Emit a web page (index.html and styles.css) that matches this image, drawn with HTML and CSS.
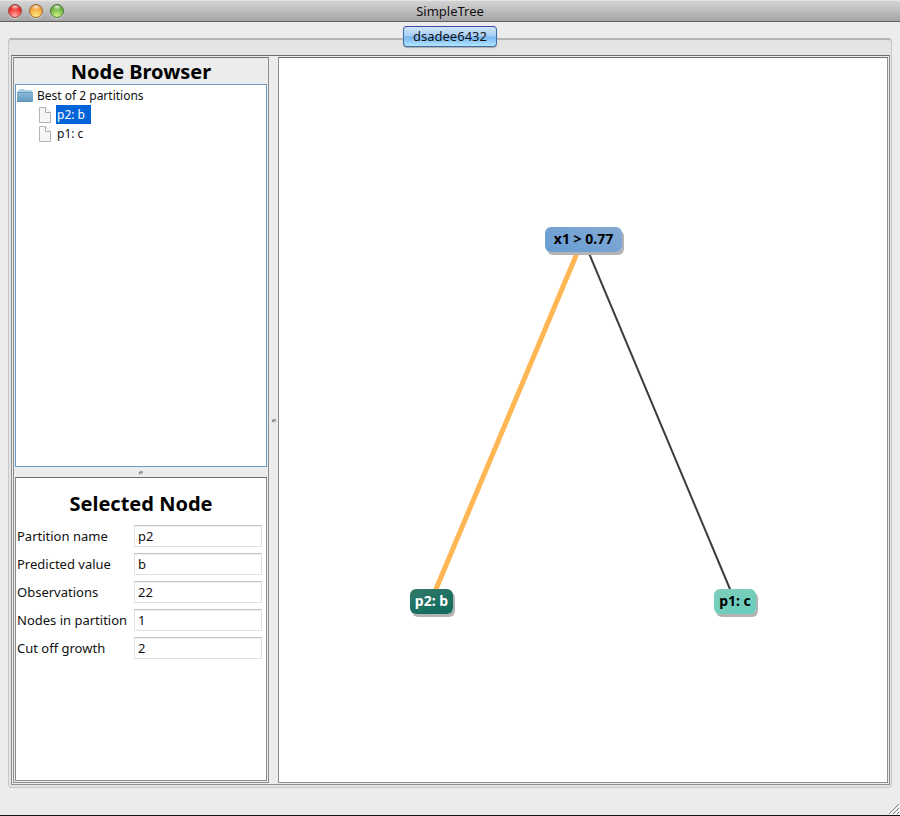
FILE: index.html
```html
<!DOCTYPE html>
<html lang="en">
<head>
<meta charset="utf-8">
<title>SimpleTree</title>
<link rel="stylesheet" href="styles.css">
</head>
<body>
<div class="window">
  <header class="titlebar">
    <div class="lights">
      <button class="light red" aria-label="Close"></button>
      <button class="light amber" aria-label="Minimize"></button>
      <button class="light green" aria-label="Zoom"></button>
    </div>
    <div class="title">SimpleTree</div>
  </header>
  <main class="content">
    <button class="tab">dsadee6432</button>
    <div class="group">
      <div class="split">
        <section class="sidebar">
          <h1 class="heading">Node Browser</h1>
          <ul class="tree">
            <li class="row">
              <svg class="folder" width="16" height="14" viewBox="0 0 16 14">
                <defs><linearGradient id="fold" x1="0" y1="0" x2="0" y2="1"><stop offset="0" stop-color="#8fbcd9"/><stop offset="1" stop-color="#5f97bd"/></linearGradient></defs>
                <path d="M1 4V2q0-1 1-1l1-1h4l1 1h6q1 0 1 1v2z" fill="#a9cfe2"/>
                <path d="M0 3h16v9q0 1-1 1H1q-1 0-1-1z" fill="url(#fold)"/>
                <path d="M0 3.500h16M0 12.500h16" stroke="#5689ad" stroke-opacity=".6"/>
              </svg>
              <span class="label">Best of 2 partitions</span>
            </li>
            <li class="row leaf">
              <svg width="12" height="16" viewBox="0 0 12 16"><path d="M.5.5h6l5 5v10H.5z" fill="#f6f6f6" stroke="#b4b4b4"/><path d="M6.500.5v5h5" fill="#fff" stroke="#aaa"/></svg>
              <span class="label selected">p2: b</span>
            </li>
            <li class="row leaf">
              <svg width="12" height="16" viewBox="0 0 12 16"><path d="M.5.5h6l5 5v10H.5z" fill="#f6f6f6" stroke="#b4b4b4"/><path d="M6.500.5v5h5" fill="#fff" stroke="#aaa"/></svg>
              <span class="label">p1: c</span>
            </li>
          </ul>
          <div class="divider horizontal"><svg class="grip" width="6" height="5" viewBox="0 0 6 5"><circle cx="3" cy="3" r="2" fill="#ccc"/><path d="M1 4q0-3 4-2" fill="none" stroke="#666"/></svg></div>
          <form class="details">
            <h2 class="heading">Selected Node</h2>
            <div class="fields">
              <label for="name">Partition name</label><input id="name" value="p2">
              <label for="value">Predicted value</label><input id="value" value="b">
              <label for="obs">Observations</label><input id="obs" value="22">
              <label for="nodes">Nodes in partition</label><input id="nodes" value="1">
              <label for="cut">Cut off growth</label><input id="cut" value="2">
            </div>
          </form>
        </section>
        <div class="divider vertical"><svg class="grip" width="6" height="5" viewBox="0 0 6 5"><circle cx="3" cy="3" r="2" fill="#ccc"/><path d="M1 4q0-3 4-2" fill="none" stroke="#666"/></svg></div>
        <section class="canvas">
          <div class="diagram">
            <svg class="edges" width="348" height="390" viewBox="0 0 348 390">
              <path d="M174 14L22 376" stroke="#ffb653" stroke-width="5"/>
              <path d="M174 14L326 376" stroke="#3c3c3f" stroke-width="2"/>
            </svg>
            <div class="node root">x1 &gt; 0.77</div>
            <div class="node left">p2: b</div>
            <div class="node right">p1: c</div>
          </div>
        </section>
      </div>
    </div>
  </main>
  <svg class="resize" width="12" height="12" viewBox="0 0 12 12"><path d="M1 11L11 1M5 11l6-6M9 11l2-2" stroke="#808080"/><path d="M2 12L12 2M6 12l6-6M10 12l2-2" stroke="#fff"/></svg>
</div>
</body>
</html>
```
FILE: styles.css
```css
* { box-sizing: border-box; }

body {
  margin: 0;
  font: 13px/18px "Noto Sans", "Open Sans", sans-serif;
  color: #111;
}

.window {
  position: relative;
  display: flex;
  flex-direction: column;
  min-height: 100vh;
  background: #ececec;
  border-bottom: 1px solid #111;
}

.titlebar {
  display: grid;
  grid-template-columns: 1fr auto 1fr;
  align-items: center;
  height: 22px;
  padding: 0 8px;
  background: linear-gradient(#d4d4d4, #a5a5a5);
  border-top: 1px solid #e4e4e4;
  border-bottom: 1px solid #606060;
}

.lights { display: flex; gap: 7px; }

.light {
  width: 14px;
  height: 14px;
  padding: 0;
  border: 1px solid;
  border-radius: 50%;
  box-shadow: 0 1px 0 #d8d8d8;
}

.red {
  border-color: #96423f;
  background: radial-gradient(ellipse 5px 3px at 50% 15%, #fffc, transparent), radial-gradient(circle at 50% 95%, #ffb4ac, #ee2c2b 65%, #b51c1b);
}

.amber {
  border-color: #9c6532;
  background: radial-gradient(ellipse 5px 3px at 50% 15%, #fffc, transparent), radial-gradient(circle at 50% 95%, #fff08a, #f3a33b 65%, #bd6b1d);
}

.green {
  border-color: #4d7837;
  background: radial-gradient(ellipse 5px 3px at 50% 15%, #fffc, transparent), radial-gradient(circle at 50% 95%, #d4f48e, #6db344 65%, #3e7d24);
}

.content {
  display: flex;
  flex: 1;
  flex-direction: column;
  padding: 4px 8px 27px;
}

.tab {
  z-index: 1;
  align-self: center;
  height: 21px;
  padding: 0 9px 2px;
  font: inherit;
  color: #111;
  border: 1px solid #3e6da8;
  border-top-color: #4141ac;
  border-radius: 4px;
  background: linear-gradient(#d3e6f9, #a5cdf4 48%, #76b5f0 52%, #b2e6ff);
  box-shadow: 0 1px 1px #aaa;
}

.group {
  display: flex;
  flex: 1;
  margin-top: -9px;
  padding: 15px 1px 2px 2px;
  background: #e4e4e4;
  border: 1px solid #c8c8c8;
  border-top: 2px solid #b4b4b4;
  border-radius: 4px;
}

.split {
  display: flex;
  flex: 1;
  padding: 1px;
  background: #ececec;
  border: 1px solid #8e8e8e;
  border-top-color: #6c6c6c;
}

.sidebar {
  display: flex;
  flex-direction: column;
  width: 256px;
  padding: 1px;
  border: 1px solid #8e8e8e;
  border-top-color: #6c6c6c;
}

.heading {
  margin: 0;
  font-size: 20px;
  line-height: 25px;
  text-align: center;
  color: #000;
}

.tree {
  flex: 1;
  margin: 0;
  padding: 1px;
  list-style: none;
  font-size: 12px;
  background: #fff;
  border: 1px solid #6e9bc4;
}

.row {
  display: flex;
  align-items: center;
  gap: 3px;
  height: 19px;
}

.leaf { padding-left: 22px; gap: 5px; }

.label {
  padding: 0 6px 0 1px;
  line-height: 19px;
}

.selected { color: #fff; background: #0064d8; }

.divider {
  display: flex;
  align-items: center;
  justify-content: center;
}

.horizontal { height: 10px; }

.vertical { width: 9px; }

.grip { display: block; }

.details {
  height: 304px;
  padding-top: 13px;
  background: #fff;
  border: 1px solid #8e8e8e;
  border-top-color: #6c6c6c;
}

.fields {
  display: grid;
  grid-template-columns: 117px 1fr;
  row-gap: 6px;
  align-items: center;
  padding: 9px 4px 0 1px;
}

.fields label { white-space: nowrap; }

.fields input {
  min-width: 0;
  height: 22px;
  padding: 0 3px;
  font: inherit;
  color: #111;
  background: #fff;
  border: 1px solid #e0e0e0;
  border-top: 1px solid #c4c4c4;
  border-radius: 0;
  box-shadow: inset 0 1px 0 #eee;
}

.canvas {
  display: grid;
  flex: 1;
  place-items: center;
  background: #fff;
  border: 1px solid #8e8e8e;
  border-top-color: #6c6c6c;
}

.diagram {
  position: relative;
  width: 348px;
  height: 390px;
}

.edges { display: block; }

.node {
  position: absolute;
  height: 25px;
  font-size: 14px;
  font-weight: bold;
  line-height: 24px;
  text-align: center;
  white-space: nowrap;
  color: #000;
  border-radius: 6px;
  box-shadow: 2px 3px 0 #b3b3b3;
}

.root {
  left: 136px;
  top: 2px;
  width: 77px;
  background: linear-gradient(20deg, #669dd3, #84a9d2);
}

.left {
  left: 1px;
  top: 364px;
  width: 43px;
  color: #fff;
  background: linear-gradient(160deg, #32796a, #0c6a5c);
}

.right {
  left: 305px;
  top: 364px;
  width: 42px;
  background: linear-gradient(160deg, #7fcdbb, #66cdbb);
}

.resize {
  position: absolute;
  right: 0;
  bottom: 0;
}
```
